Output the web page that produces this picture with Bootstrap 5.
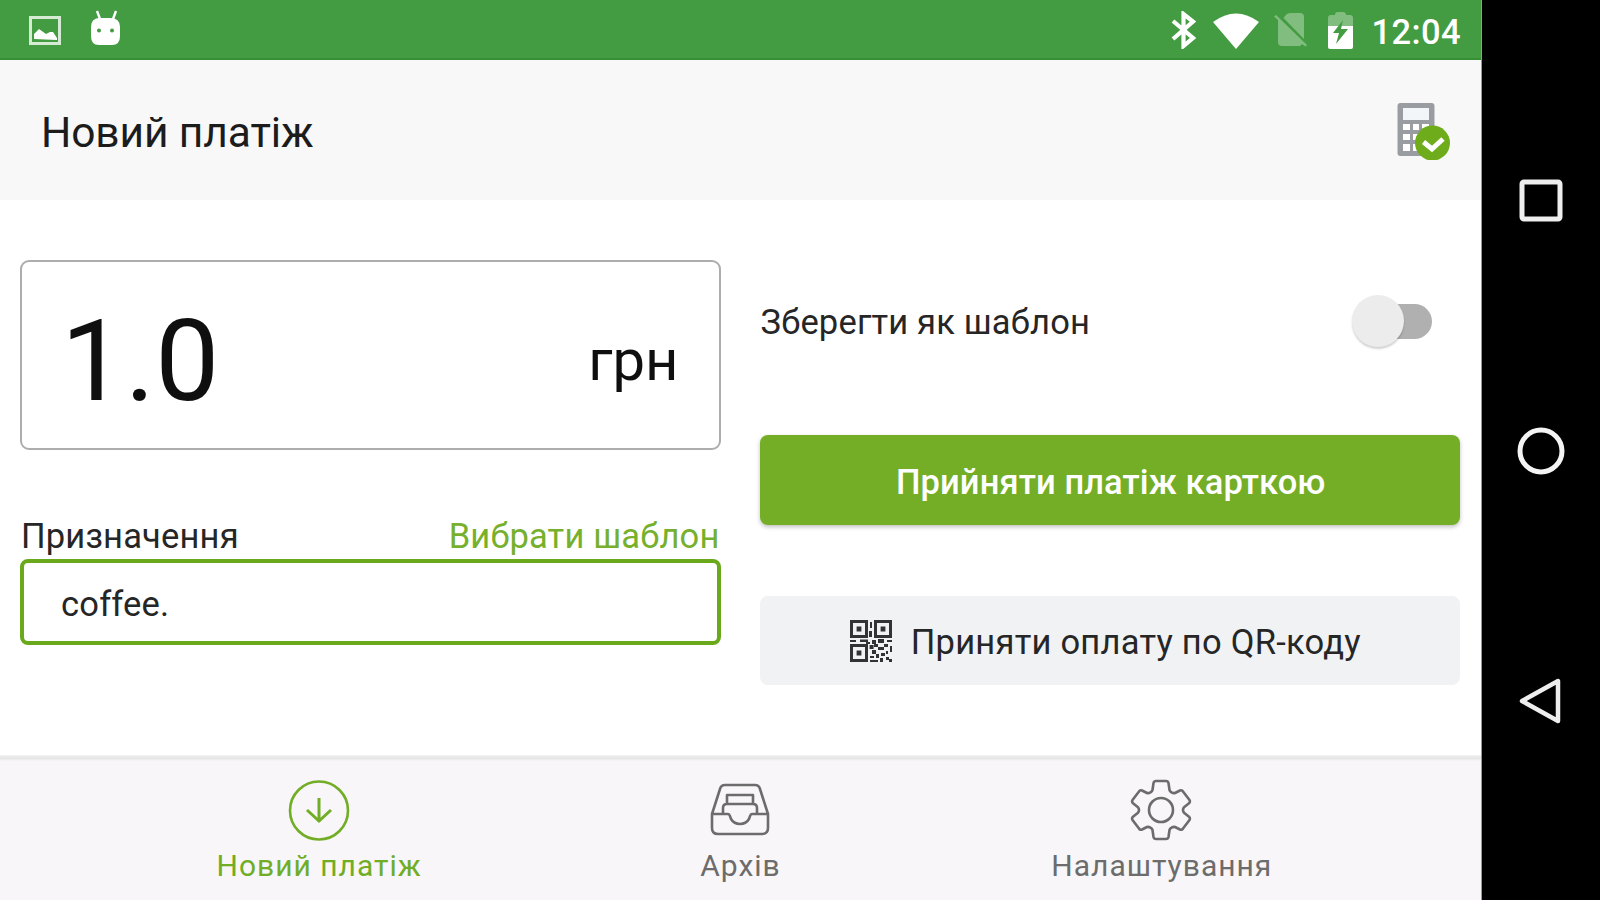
<!DOCTYPE html>
<html lang="uk">

<head>
	<meta charset="utf-8">
	<meta name="viewport" content="width=device-width, initial-scale=1">
	<title>Новий платіж</title>
	<link href="https://cdn.jsdelivr.net/npm/bootstrap@5.3.0/dist/css/bootstrap.min.css" rel="stylesheet">
	<style>
		body {
			font-family: Roboto, "Noto Sans", sans-serif;
			font-size: 34.5px;
			line-height: 1;
			letter-spacing: .17px;
			color: #262626;
			overflow: hidden;
		}
		svg { display: block; flex: none; }
		.app { width: 1482px; border-right: 1px solid #999; }
		.status-bar { height: 60px; background: #449c42; padding: 2px 20px 0 28px; border-bottom: 2px solid #369033; }
		.clock { font-size: 34.5px; font-weight: 500; letter-spacing: .4px; padding-top: 4px; }
		.title-bar { height: 140px; background: #f8f8f8; padding: 0 30px 0 41px; }
		.title-bar h1 { font-size: 42.5px; font-weight: 400; letter-spacing: -.1px; color: #1c1c1c; padding-top: 5px; }
		.content { height: 555px; padding: 60px 21px 0 20px; column-gap: 39px; }
		.pane { width: 701px; }
		.amount { height: 190px; border: 2px solid #adadad; border-radius: 9px; padding: 10px 40px 0 39px; color: #0f0f0f; letter-spacing: 0; }
		.amount-value { font-size: 114px; padding-top: 2px; }
		.amount-unit { font-size: 58px; }
		.labels { margin-top: 69px; height: 40px; padding: 0 1px; }
		.green-link { color: #76b02c; text-decoration: none; }
		.purpose, .purpose:focus {
			height: 86px;
			border: 4px solid #69a91b;
			border-radius: 8px;
			padding: 4px 37px 0;
			font-size: 34.5px;
			letter-spacing: .2px;
			color: #262626;
			box-shadow: none;
		}
		.save-row { height: 122px; padding: 1px 28px 0 1px; }
		.save-row > span { padding-top: 1px; }
		.toggle { width: 80px; height: 53px; position: relative; }
		.toggle-track { width: 62px; height: 35px; border-radius: 18px; background: #b0b0b0; }
		.toggle-thumb { position: absolute; left: 0; top: 0; width: 52px; height: 52px; border-radius: 50%; background: #ececec; box-shadow: 0 2px 2px rgba(0, 0, 0, .18); }
		.pay-btn { font-size: 34.5px; line-height: 1; border: 0; border-radius: 8px; letter-spacing: .1px; }
		.pay-card, .pay-card:hover { height: 90px; margin-top: 53px; padding: 10px 0 6px 2px; background: #74ae26; color: #fff; font-weight: 500; box-shadow: 0 2px 4px rgba(0, 0, 0, .25); }
		.pay-qr, .pay-qr:hover { height: 89px; margin-top: 71px; padding: 0 9px 0 0; background: #f0f2f4; color: #262626; gap: 19px; letter-spacing: .24px; }
		.pay-qr span { padding-top: 4px; }
		.tabs { height: 145px; background: linear-gradient(#f3f3f3, #e4e4e4 3px, #f8f6f8 6px); padding: 0 109px 0 108px; }
		.tab { flex: 1; color: #6c6c6c; text-decoration: none; padding-top: 24px; gap: 10px; font-size: 30px; letter-spacing: 1px; }
		.tab span { padding-left: 1px; }
		.tab.current { color: #71ad25; }
		.sys-nav { width: 118px; background: #000; padding: 176px 0 175px; }
	</style>
</head>

<body>
	<div class="d-flex vh-100">
		<div class="app d-flex flex-column bg-white">
			<header class="status-bar d-flex align-items-center justify-content-between text-white">
				<div class="d-flex align-items-center">
					<svg width="34" height="34" viewBox="0 0 34 34">
						<path d="M2.500 4.500h29v26h-29z" fill="none" stroke="#d5ebd4" stroke-width="3"/>
						<path d="M6 26v-5l5-5 7 5 4-2h3l4 6v2z" fill="#fff"/>
					</svg>
					<svg class="ms-4" width="40" height="40" viewBox="0 0 40 40">
						<path d="M11 1l3 8M30 1l-3 8" stroke="#fff" stroke-width="2.400"/>
						<path d="M5 17q0-9 9-9h10q10 0 10 9v9q0 9-8 9H13q-8 0-8-9z" fill="#fff"/>
						<circle cx="13" cy="20.500" r="2" fill="#449c42"/>
						<circle cx="26" cy="20.500" r="2" fill="#449c42"/>
					</svg>
				</div>
				<div class="d-flex align-items-center">
					<svg width="26" height="38" viewBox="0 0 26 38">
						<path d="M2 10l20 17-9.500 8V3L22 10.500 2 28" fill="none" stroke="#fff" stroke-width="4.200"/>
					</svg>
					<svg width="48" height="38" viewBox="0 0 48 38" style="margin-left: 15px">
						<path d="M1 11Q24-6 47 11L24 38z" fill="#fff"/>
					</svg>
					<svg width="34" height="36" viewBox="0 0 34 36" style="margin-left: 14px">
						<path d="M11 4q2-3 5-3h10q4 0 4 4v22L9.500 6z" fill="#82bd80"/>
						<path d="M2 3l31 30-1.500 1.500L28 32q-1 2-3 2H8q-4 0-4-4V8L0 4.500z" fill="#82bd80"/>
					</svg>
					<svg width="26" height="38" viewBox="0 0 26 38" style="margin-left: 20px">
						<path d="M0 16V7q0-3 3-3h4q0-3 3-3h5q3 0 3 3h4q3 0 3 3v9z" fill="#82bd80"/>
						<path d="M0 15h25v21q0 2-2 2H2q-2 0-2-2z" fill="#fff"/>
						<path d="M15 9L5 22h6L8 33l12-15h-7z" fill="#449c42"/>
					</svg>
					<span class="clock" style="margin-left: 17px">12:04</span>
				</div>
			</header>

			<div class="title-bar d-flex align-items-center justify-content-between">
				<h1 class="mb-0">Новий платіж</h1>
				<svg width="55" height="60" viewBox="0 0 55 60">
					<rect x="1.500" y="3" width="37" height="53" rx="3" fill="#999da1"/>
					<rect x="7" y="8" width="26" height="12" fill="#f3f6f8"/>
					<path d="M7 24h7v6H7zm10 0h6v6h-6zm9 0h7v6h-7zM7 34h7v6H7zm10 0h6v6h-6zM7 44h7v7H7zm10 0h6v7h-6z" fill="#fff"/>
					<circle cx="36.500" cy="43" r="17.500" fill="#6fac1b"/>
					<path d="M27.500 42l8.500 7 11-10" fill="none" stroke="#fff" stroke-width="5"/>
				</svg>
			</div>

			<main class="content d-flex">
				<section class="pane">
					<div class="amount d-flex align-items-center justify-content-between">
						<span class="amount-value">1.0</span>
						<span class="amount-unit">грн</span>
					</div>
					<div class="labels d-flex justify-content-between">
						<label for="purpose">Призначення</label>
						<a class="green-link" href="#">Вибрати шаблон</a>
					</div>
					<input id="purpose" class="purpose form-control" type="text" value="coffee.">
				</section>
				<section class="pane">
					<div class="save-row d-flex align-items-center justify-content-between">
						<span>Зберегти як шаблон</span>
						<div class="toggle d-flex align-items-center justify-content-end">
							<div class="toggle-track"></div>
							<div class="toggle-thumb"></div>
						</div>
					</div>
					<button class="btn pay-btn pay-card w-100" type="button">Прийняти платіж карткою</button>
					<button class="btn pay-btn pay-qr w-100 d-flex align-items-center justify-content-center" type="button">
						<svg width="42" height="42" viewBox="0 0 21 21" fill="#333">
							<path fill-rule="evenodd" d="M0 0h9v9H0zM1.500 1.500v6h6v-6zM12 0h9v9h-9zM13.500 1.500v6h6v-6zM0 12h9v9H0zM1.500 13.500v6h6v-6z"/>
							<path d="M3.300 3.300h2.400v2.400H3.300zM15.300 3.300h2.400v2.400h-2.400zM3.300 15.300h2.400v2.400H3.300z"/>
							<path d="M10 1h1v3h-1zM9.500 5.500h1.500v3H9.500zM0 10h3v1H0zM5 9.700h4v1.300H5zM8 11h2v1H8zM11 10h2v2h-2zM14 9.500h3v2h-3zM18.500 10H21v1h-2.500zM9.800 12.500h2v2h-2zM12 12h2v1.500h-2zM14 13.500h3V15h-3zM17 12h2v1.500h-2zM20 13h1v3h-1zM11 15h2v2h-2zM10 18h2v1h-2zM13 17h1.500v2H13zM10 20h4v1h-4zM15.500 16.500h2V18h-2zM15 19h1.500v2H15zM18 18.500h1.500V20H18zM19.500 19.500H21V21h-1.500zM18 15.500h1V17h-1z"/>
						</svg>
						<span>Приняти оплату по QR-коду</span>
					</button>
				</section>
			</main>

			<nav class="tabs d-flex">
				<a class="tab current d-flex flex-column align-items-center" href="#">
					<svg width="62" height="62" viewBox="0 0 62 62" fill="none" stroke="currentColor">
						<circle cx="31" cy="31.500" r="29" stroke-width="2.600"/>
						<path d="M31 19v24M19 31l12 11 12-11" stroke-width="3"/>
					</svg>
					<span>Новий платіж</span>
				</a>
				<a class="tab d-flex flex-column align-items-center" href="#">
					<svg width="62" height="62" viewBox="0 0 62 62" fill="none" stroke="currentColor" stroke-width="2.600" stroke-linejoin="round">
						<path d="M3 35L11 10q1-4 5-4h30q4 0 5 4l8 25v14q0 6-6 6H9q-6 0-6-6zM3 35h16c2 0 2 3 3 5q3 5 9 5t9-5c1-2 1-5 3-5h16"/>
						<path d="M18 25v-9h26v9M14 35v-6q0-4 4-4h26q4 0 4 4v6"/>
					</svg>
					<span>Архів</span>
				</a>
				<a class="tab d-flex flex-column align-items-center" href="#">
					<svg width="62" height="62" viewBox="0 0 62 62" fill="none" stroke="currentColor" stroke-width="2.600" stroke-linejoin="round">
						<circle cx="31" cy="31" r="12"/>
						<path d="M26 2h10q2 0 2.500 2l1 7q.5 1.500 2 2.300 2 1.200 3.500.7l5-2.500q2-.8 3 1l6.500 8.500q1 2-.5 3.200l-5 4Q52 31 54 33.800l5 4q1.500 1.200.5 3.200L53 49.500q-1 1.800-3 1L45 48q-1.500-.5-3.500.7-1.500.8-2 2.300l-1 7q-.5 2-2.500 2H26q-2 0-2.500-2l-1-7q-.5-1.500-2-2.300-2-1.200-3.500-.7l-5 2.500q-2 .8-3-1L2.500 41Q1.500 39 3 37.800l5-4Q10 31 8 28.200l-5-4Q1.500 23 2.500 21L9 12.500q1-1.800 3-1l5 2.500q1.500.5 3.500-.7 1.500-.8 2-2.300l1-7Q24 2 26 2z"/>
					</svg>
					<span>Налаштування</span>
				</a>
			</nav>
		</div>

		<aside class="sys-nav d-flex flex-column align-items-center justify-content-between">
			<svg width="48" height="48" viewBox="0 0 48 48"><rect x="5" y="6" width="38" height="37" rx="2" fill="none" stroke="#eee" stroke-width="5"/></svg>
			<svg width="48" height="48" viewBox="0 0 48 48"><circle cx="24" cy="24" r="21" fill="none" stroke="#f4f4f4" stroke-width="5"/></svg>
			<svg width="48" height="48" viewBox="0 0 48 48"><path d="M5 24L41 4v40z" fill="none" stroke="#eee" stroke-width="4.500" stroke-linejoin="round"/></svg>
		</aside>
	</div>

	<script src="https://cdn.jsdelivr.net/npm/bootstrap@5.3.0/dist/js/bootstrap.bundle.min.js"></script>
</body>

</html>
